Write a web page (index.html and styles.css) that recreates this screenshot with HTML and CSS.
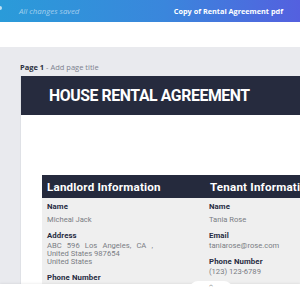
FILE: index.html
```html
<!DOCTYPE html>
<html>
<head>
<meta charset="utf-8">
<link rel="stylesheet" href="styles.css">
</head>
<body>
<div class="app">
  <header class="topbar">
    <span class="dot"></span>
    <span class="saved">All changes saved</span>
    <span class="doc-title">Copy of Rental Agreement pdf</span>
  </header>
  <div class="toolbar"></div>
  <main class="canvas">
    <div class="page-label"><b>Page 1</b> - Add page title</div>
    <section class="page">
      <div class="page-head">HOUSE RENTAL AGREEMENT</div>
      <div class="page-body">
        <div class="info-table">
          <div class="col col-left">
            <div class="col-head">Landlord Information</div>
            <div class="col-body">
              <div class="field first">
                <div class="label">Name</div>
                <div class="value">Micheal Jack</div>
              </div>
              <div class="field">
                <div class="label">Address</div>
                <div class="value address">ABC 596 Los Angeles, CA , United States 987654<br>United States</div>
              </div>
              <div class="field">
                <div class="label">Phone Number</div>
                <div class="value">(123) 123-6789</div>
              </div>
            </div>
          </div>
          <div class="col col-right">
            <div class="col-head">Tenant Information</div>
            <div class="col-body">
              <div class="field first">
                <div class="label">Name</div>
                <div class="value">Tania Rose</div>
              </div>
              <div class="field">
                <div class="label">Email</div>
                <div class="value">taniarose@rose.com</div>
              </div>
              <div class="field">
                <div class="label">Phone Number</div>
                <div class="value">(123) 123-6789</div>
              </div>
            </div>
          </div>
        </div>
      </div>
    </section>
  </main>
  <footer class="footer">
    <div class="tab"><span class="caret">^</span></div>
  </footer>
</div>
</body>
</html>
```
FILE: styles.css
```css
* { box-sizing: border-box; }
html, body { margin: 0; padding: 0; }
body { width: 300px; height: 300px; overflow: hidden; font-family: "Open Sans", sans-serif; }
.app { display: flex; flex-direction: column; height: 300px; position: relative; }

.topbar {
  height: 22px; flex: none;
  background: linear-gradient(90deg, #2a9bd9 0%, #3a86dc 55%, #5460df 100%);
  display: flex; align-items: center; position: relative;
  padding: 0 17px 0 19px;
}
.dot { position: absolute; left: -2px; top: 6px; width: 4px; height: 4px; border-radius: 50%; background: rgba(255,255,255,0.7); }
.saved { font-style: italic; font-size: 7.8px; color: rgba(255,255,255,0.55); }
.doc-title { margin-left: auto; font-weight: 700; font-size: 7.3px; color: #fff; }

.toolbar { height: 25px; flex: none; background: #fff; }

.canvas {
  flex: 1; background: #e9eaee; overflow: hidden;
  padding: 15px 0 0 20px;
}
.page-label { font-size: 7.5px; line-height: 10px; color: #7d828f; margin-bottom: 4px; }
.page-label b { color: #2b3040; font-weight: 700; }

.page { background: #fff; width: 320px; border-left: 1px solid #dfe1e6; }
.page-head {
  height: 39px; background: #262b3e; color: #fff;
  font-family: Roboto, sans-serif; font-weight: 700; font-size: 15.8px;
  letter-spacing: -0.4px;
  display: flex; align-items: center; padding-left: 28px;
}
.page-body { padding: 60px 0 0 21px; }

.info-table { display: flex; }
.col-left { width: 163px; }
.col-right { flex: 1; }
.col-head {
  height: 23px; background: #252a3d; color: #fff;
  font-family: Roboto, sans-serif; font-weight: 700; font-size: 11.6px;
  letter-spacing: 0.2px;
  display: flex; align-items: center; padding-left: 5px;
}
.col-body { background: #efefef; padding: 4px 5px 20px; height: 110px; }
.col-right .col-body { padding-left: 4px; }

.field { margin-bottom: 7px; }
.label { font-family: Roboto, sans-serif; font-weight: 700; font-size: 7.8px; line-height: 9px; color: #272c42; letter-spacing: 0.1px; }
.value { font-family: Roboto, sans-serif; font-size: 7.6px; line-height: 8px; color: #7a7d84; margin-top: 2px; }
.field.first .value { margin-top: 5px; }
.address { width: 106px; text-align: justify; }

.footer {
  position: absolute; left: 0; right: 0; bottom: 0; height: 16px;
  background: #fff; box-shadow: 0 -1px 2px rgba(0,0,0,0.06);
}
.tab {
  position: absolute; left: 190px; top: -3px; width: 42px; height: 8px;
  background: #fff; border-radius: 10px 10px 0 0;
  display: flex; justify-content: center;
}
.caret { font-family: "DejaVu Sans", sans-serif; font-size: 6px; color: #555; line-height: 8px; margin-top: 2px; }
```
